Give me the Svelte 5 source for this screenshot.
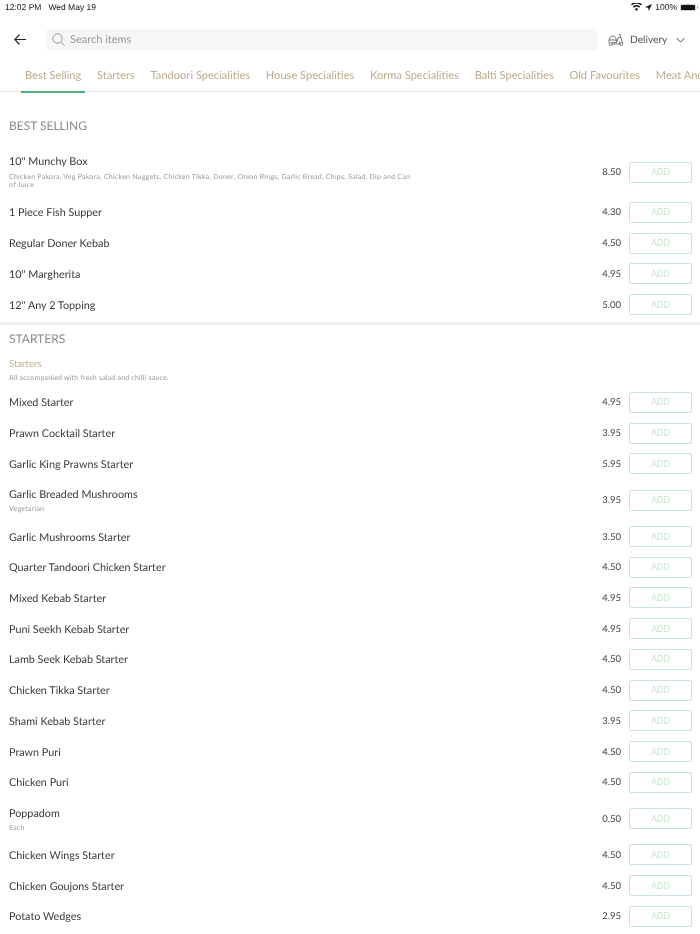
<script>
  const tabs = ['Best Selling', 'Starters', 'Tandoori Specialities', 'House Specialities', 'Korma Specialities', 'Balti Specialities', 'Old Favourites', 'Meat And Chicken'];

  const bestSelling = [
    { name: '10" Munchy Box', price: '8.50', desc: 'Chicken Pakora, Veg Pakora, Chicken Nuggets, Chicken Tikka, Doner, Onion Rings, Garlic Bread, Chips, Salad, Dip and Can of Juice' },
    { name: '1 Piece Fish Supper', price: '4.30' },
    { name: 'Regular Doner Kebab', price: '4.50' },
    { name: '10" Margherita', price: '4.95' },
    { name: '12" Any 2 Topping', price: '5.00' }
  ];

  const starters = [
    { name: 'Mixed Starter', price: '4.95' },
    { name: 'Prawn Cocktail Starter', price: '3.95' },
    { name: 'Garlic King Prawns Starter', price: '5.95' },
    { name: 'Garlic Breaded Mushrooms', price: '3.95', desc: 'Vegetarian' },
    { name: 'Garlic Mushrooms Starter', price: '3.50' },
    { name: 'Quarter Tandoori Chicken Starter', price: '4.50' },
    { name: 'Mixed Kebab Starter', price: '4.95' },
    { name: 'Puni Seekh Kebab Starter', price: '4.95' },
    { name: 'Lamb Seek Kebab Starter', price: '4.50' },
    { name: 'Chicken Tikka Starter', price: '4.50' },
    { name: 'Shami Kebab Starter', price: '3.95' },
    { name: 'Prawn Puri', price: '4.50' },
    { name: 'Chicken Puri', price: '4.50' },
    { name: 'Poppadom', price: '0.50', desc: 'Each' },
    { name: 'Chicken Wings Starter', price: '4.50' },
    { name: 'Chicken Goujons Starter', price: '4.50' },
    { name: 'Potato Wedges', price: '2.95' }
  ];
</script>

{#snippet row(item)}
  <div class="row" class:tall={item.desc} class:big={item.desc && item.desc.length > 60}>
    <div class="info">
      <div class="name">{item.name}</div>
      {#if item.desc}<div class="desc">{item.desc}</div>{/if}
    </div>
    <span class="price">{item.price}</span>
    <button class="add" type="button">ADD</button>
  </div>
{/snippet}

<div class="page">
  <div class="status">
    <span class="clock">12:02 PM</span>
    <span class="date">Wed May 19</span>
    <span class="status-right">
      <svg width="11" height="8" viewBox="0 0 22 16"><path d="M11 16l3.4-4.2a5.4 5.4 0 0 0-6.8 0zM5.7 9.4a8.4 8.4 0 0 1 10.6 0l2-2.5a11.6 11.6 0 0 0-14.6 0zM1.8 4.6a14.6 14.6 0 0 1 18.4 0L22 2.4a17.6 17.6 0 0 0-22 0z" fill="#111"/></svg>
      <svg class="loc" width="7" height="7" viewBox="0 0 16 16"><path d="M16 0L0 7.5l7.5 1L8.5 16z" fill="#111"/></svg>
      <span>100%</span>
      <span class="battery"><span class="level"></span></span>
    </span>
  </div>

  <header class="top">
    <svg class="back" width="12" height="11" viewBox="0 0 12 11" fill="none" stroke="#222" stroke-width="1.1"><path d="M12 5.500H1M5.500 .5L.8 5.500 5.500 10.500"/></svg>
    <div class="search">
      <svg width="13" height="13" viewBox="0 0 13 13" fill="none" stroke="#8c8c8c" stroke-width=".9"><circle cx="5.500" cy="5.500" r="4.700"/><path d="M9 9L12.600 12.600"/></svg>
      <span>Search items</span>
    </div>
    <div class="mode">
      <svg width="16" height="12" viewBox="0 0 16 12" fill="none" stroke="#555" stroke-width=".8"><circle cx="2.600" cy="10" r="1.500"/><circle cx="13.400" cy="10" r="1.500"/><path d="M1 8.500V7c0-3 1.500-5 3.700-5S8.400 4 8.400 7v1.500H4M1 6h7.400M4.100 10h7.800M11 .7h1.500v2L14 7l.8 2M10.500 3.500L8.400 8.500M10.500 3.500h2.500M11.900 10l-.5-2.500"/></svg>
      <span>Delivery</span>
      <svg class="chev" width="9" height="6" viewBox="0 0 9 6" fill="none" stroke="#444" stroke-width="1"><path d="M.5 1l4 4 4-4"/></svg>
    </div>
  </header>

  <nav class="tabs">
    {#each tabs as tab, i}
      <span class="tab" class:active={i === 0}>{tab}</span>
    {/each}
  </nav>

  <section class="best">
    <h2>BEST SELLING</h2>
    {#each bestSelling as item}
      {@render row(item)}
    {/each}
  </section>

  <section class="starters">
    <h2>STARTERS</h2>
    <div class="sub">Starters</div>
    <div class="sub-note">All accompanied with fresh salad and chilli sauce.</div>
    {#each starters as item}
      {@render row(item)}
    {/each}
  </section>
</div>

<style>
  :global(body) {
    margin: 0;
    background: #fff;
  }

  .page {
    width: 700px;
    height: 934px;
    overflow: hidden;
    font-family: Lato, "Open Sans", sans-serif;
    text-rendering: geometricPrecision;
    will-change: transform;
    color: #333;
  }

  .status {
    display: flex;
    align-items: center;
    height: 14px;
    padding: 0 4px 0 5px;
    font-family: "Liberation Sans", sans-serif;
    font-size: 8.500px;
    color: #111;
  }

  .date {
    margin-left: 7px;
  }

  .status-right {
    display: flex;
    align-items: center;
    gap: 3px;
    margin-left: auto;
  }

  .battery {
    position: relative;
    display: block;
    width: 16px;
    height: 7px;
    padding: 1px;
    margin-left: 0;
    border-radius: 2px;
    box-sizing: border-box;
    background: #ccc;
  }

  .battery::after {
    content: '';
    position: absolute;
    top: 2px;
    right: -2px;
    width: 1px;
    height: 3px;
    background: #aaa;
  }

  .level {
    display: block;
    height: 100%;
    border-radius: 1px;
    background: #111;
  }

  .top {
    display: flex;
    align-items: center;
    height: 21px;
    margin-top: 15px;
  }

  .back {
    margin: 0 20px 0 14px;
  }

  .search {
    display: flex;
    align-items: center;
    gap: 5px;
    width: 551px;
    height: 21px;
    padding-left: 6px;
    box-sizing: border-box;
    border-radius: 3px;
    background: #f6f6f6;
    font-size: 11px;
    color: #9a9a9a;
  }

  .mode {
    display: flex;
    align-items: center;
    margin-left: 11px;
    font-size: 10.200px;
    color: #555;
  }

  .mode span {
    margin-left: 6px;
  }

  .chev {
    margin-left: 9px;
  }

  .tabs {
    display: flex;
    gap: 7.700px;
    height: 42px;
    padding-left: 21px;
    box-sizing: border-box;
    border-bottom: 1px solid #e2e2e2;
    white-space: nowrap;
  }

  .tab {
    padding: 19px 4px 0;
    height: 22px;
    font-size: 11.100px;
    line-height: 14px;
    color: #bdab8b;
  }

  .active {
    border-bottom: 2px solid #4fb277;
  }

  section {
    padding: 0 8px 0 9px;
  }

  .best {
    height: 230px;
    border-bottom: 3px solid #f0f0f0;
  }

  h2 {
    margin: 0;
    font-size: 12px;
    line-height: 15px;
    font-weight: 400;
    color: #8a8a8a;
  }

  .best h2 {
    padding: 26px 0 14px;
  }

  .starters h2 {
    padding-top: 6px;
  }

  .sub {
    margin-top: 13px;
    font-size: 9.500px;
    line-height: 11px;
    color: #bdab8b;
  }

  .sub-note {
    margin: 3px 0 3px;
    font-size: 7px;
    line-height: 11px;
    letter-spacing: .2px;
    color: #999;
  }

  .row {
    display: flex;
    align-items: center;
    height: 30.720px;
  }

  .tall {
    height: 42px;
  }

  .big {
    height: 50px;
  }

  .info {
    flex: 1;
    padding-top: 2px;
  }

  .big .info {
    padding-top: 0;
  }

  .name {
    font-size: 10.800px;
    line-height: 14px;
    color: #3a3a3a;
  }

  .desc {
    width: 404px;
    margin-top: 4px;
    font-size: 7px;
    line-height: 7.500px;
    letter-spacing: .25px;
    color: #999;
  }

  .big .desc {
    margin-top: 5px;
  }

  .price {
    margin-right: 8px;
    padding-top: 1px;
    font-size: 9.500px;
    color: #444;
  }

  .add {
    width: 63px;
    height: 21px;
    padding: 0;
    box-sizing: border-box;
    border: 1px solid #c5e6d2;
    border-radius: 2px;
    background: #fff;
    font-family: inherit;
    font-size: 8.500px;
    color: #c5e6d2;
  }
</style>
